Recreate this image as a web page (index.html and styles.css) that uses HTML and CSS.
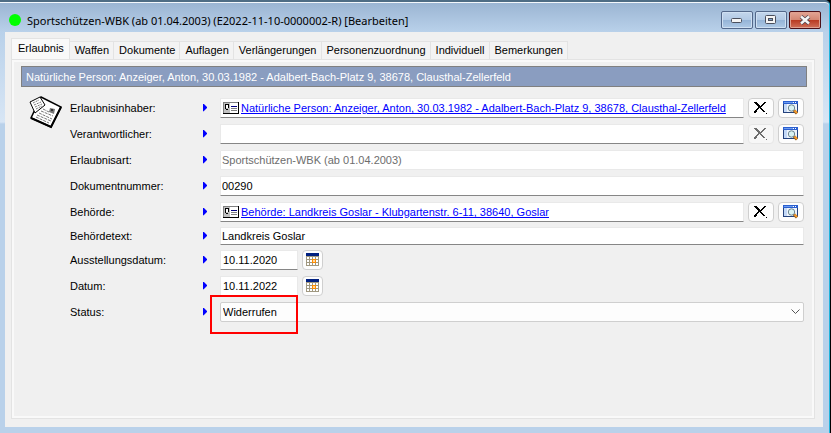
FILE: index.html
```
<!DOCTYPE html>
<html lang="de">
<head>
    <meta charset="UTF-8">
    <meta name="viewport" content="width=device-width, initial-scale=1.0">
    <title>Sportschützen-WBK [Bearbeiten]</title>
    <link rel="stylesheet" href="styles.css">
</head>
<body>
    <!-- Shared icons -->
    <svg class="icon-defs" aria-hidden="true">
        <symbol id="icon-arrow" viewBox="0 0 4 8">
            <path d="M0 0h1v1h1v1h1v1h1v1h-1v1h-1v1h-1v1h-1z" fill="#0000ff" stroke="#0000ff" stroke-width="0.5"/>
        </symbol>
        <symbol id="icon-card" viewBox="0 0 16 12">
            <rect width="16" height="12" fill="#000"/>
            <rect width="15" height="11" fill="#808080"/>
            <rect x="1" y="1" width="14" height="10" fill="#fff"/>
            <rect x="1" y="1" width="6" height="10" fill="#c0c0c0"/>
            <path d="M2 2h4v1h-3v4h-1z" fill="#000"/>
            <path d="M3 3h2v3h-2z" fill="#fff"/>
            <path d="M5 3h1v3h-1zM3 7h2v1h-2z" fill="#000"/>
            <path d="M8 4h6v1h-6z" fill="#000080"/>
            <path d="M8 6h6v1h-6zM8 8h6v1h-6z" fill="#808080"/>
        </symbol>
        <symbol id="icon-clear" viewBox="0 0 14 14">
            <path d="M0 1h3v1h1v1h1v1h1v1h1v-1h1v-1h1v-1h1v-1h2v1h-1v1h-1v1h-1v1h-1v1h-1v1h1v1h1v1h1v1h1v1h-2v-1h-1v-1h-1v-1h-1v-1h-1v1h-1v1h-1v2h-1v1h-2v-2h1v-1h1v-1h1v-1h1v-2h-1v-1h-1v-1h-1v-1h-2z" fill="currentColor"/>
            <path d="M12 12h1v1h-1z" fill="currentColor"/>
        </symbol>
        <symbol id="icon-search" viewBox="0 0 16 14">
            <rect x="0.5" y="0.5" width="14" height="11" fill="#eef4fc" stroke="#24427c"/>
            <path d="M0 0h15v3h-15z" fill="#2a5fd0"/>
            <path d="M1 1h9v1h-9z" fill="#6c9cf0"/>
            <path d="M10 1h1v1h-1zM12 1h1v1h-1z" fill="#fff"/>
            <path d="M1 3h3v8h-3z" fill="#c3d8f6"/>
            <circle cx="8.5" cy="7" r="3.2" fill="#d9f2f2" stroke="#6d8490"/>
            <path d="M11 9.5L14 12.5" stroke="#8c5a20" stroke-width="3"/>
            <path d="M11.5 9.5L14 12" stroke="#f39a2c" stroke-width="2"/>
        </symbol>
        <symbol id="icon-calendar" viewBox="0 0 13 14">
            <rect width="13" height="13" fill="#a09880"/>
            <rect width="13" height="3" fill="#002080"/>
            <path d="M1 4h2v2h-2zM4 4h2v2h-2zM7 4h2v2h-2zM10 4h2v2h-2zM1 7h2v2h-2zM4 7h2v2h-2zM10 7h2v2h-2zM1 10h2v2h-2zM4 10h2v2h-2zM7 10h2v2h-2zM10 10h2v2h-2z" fill="#fff"/>
            <path d="M6 6h4v4h-4z" fill="#ff8c00"/>
            <path d="M7 7h2v2h-2z" fill="#ffd9a0"/>
        </symbol>
    </svg>

    <div class="window">
        <div class="title-bar">
            <span class="status-dot"></span>
            <h1 class="title">Sportschützen-WBK (ab 01.04.2003) (E2022-11-10-0000002-R) [Bearbeiten]</h1>
            <div class="window-buttons">
                <button class="window-button" aria-label="Minimieren">
                    <svg width="12" height="6" viewBox="0 0 12 6"><rect x="0.5" y="1.5" width="10" height="4" rx="1" fill="#f4f4f4" stroke="#4a4f5c"/></svg>
                </button>
                <button class="window-button" aria-label="Maximieren">
                    <svg width="12" height="10" viewBox="0 0 12 10"><rect x="0.5" y="0.5" width="10" height="8" rx="1" fill="#f4f4f4" stroke="#4a4f5c"/><rect x="3.5" y="3.5" width="4" height="2" fill="#7fa3cc" stroke="#4a4f5c"/></svg>
                </button>
                <button class="window-button window-close" aria-label="Schließen">
                    <svg width="12" height="10" viewBox="0 0 12 10"><path d="M2 1.5L10 8.5M10 1.5L2 8.5" stroke="#4b4450" stroke-width="4"/><path d="M2 1.5L10 8.5M10 1.5L2 8.5" stroke="#f6f6f6" stroke-width="2.4"/></svg>
                </button>
            </div>
        </div>

        <div class="content">
            <div class="tabs" role="tablist">
                <button class="tab active" role="tab" aria-selected="true">Erlaubnis</button>
                <button class="tab" role="tab">Waffen</button>
                <button class="tab" role="tab">Dokumente</button>
                <button class="tab" role="tab">Auflagen</button>
                <button class="tab" role="tab">Verlängerungen</button>
                <button class="tab" role="tab">Personenzuordnung</button>
                <button class="tab" role="tab">Individuell</button>
                <button class="tab" role="tab">Bemerkungen</button>
            </div>

            <div class="panel" role="tabpanel">
                <div class="banner">Natürliche Person: Anzeiger, Anton, 30.03.1982 - Adalbert-Bach-Platz 9, 38678, Clausthal-Zellerfeld</div>

                <div class="form-area">
                    <svg class="form-icon" width="34" height="34" viewBox="0 0 34 34" aria-hidden="true">
                        <path d="M12 2L32 12L22 32L2 23Z" fill="#fff" stroke="#000" stroke-width="1.5"/>
                        <path d="M32 12L22 32L2 23" fill="none" stroke="#000" stroke-width="2"/>
                        <path d="M1 7L11 2L16 10L6 18Z" fill="#fff" stroke="#000"/>
                        <path d="M4 8L10 5M5 10L12 7M6 12L13 9M7 14L13 11" stroke="#777" stroke-dasharray="2 1"/>
                        <path d="M14 14L20 17M12 16L24 21M10 18L23 24M8 20L22 26M7 22L20 28" stroke="#777" stroke-dasharray="3 1"/>
                        <path d="M21 13l5 1-1 5-5-2z" fill="#777"/>
                        <path d="M22 14h2v2h-2z" fill="#333"/>
                    </svg>

                    <form class="form">
                        <div class="row">
                            <label for="inhaber">Erlaubnisinhaber:</label>
                            <svg class="arrow"><use href="#icon-arrow"/></svg>
                            <div class="field link-field">
                                <svg class="card-icon"><use href="#icon-card"/></svg>
                                <a href="#" id="inhaber">Natürliche Person: Anzeiger, Anton, 30.03.1982 - Adalbert-Bach-Platz 9, 38678, Clausthal-Zellerfeld</a>
                            </div>
                            <button type="button" class="tool-button" aria-label="Erlaubnisinhaber entfernen"><svg width="14" height="14"><use href="#icon-clear"/></svg></button>
                            <button type="button" class="tool-button" aria-label="Erlaubnisinhaber suchen"><svg width="16" height="14"><use href="#icon-search"/></svg></button>
                        </div>
                        <div class="row">
                            <label for="verantwortlicher">Verantwortlicher:</label>
                            <svg class="arrow"><use href="#icon-arrow"/></svg>
                            <input class="field" type="text" id="verantwortlicher">
                            <button type="button" class="tool-button" disabled aria-label="Verantwortlichen entfernen"><svg width="14" height="14"><use href="#icon-clear"/></svg></button>
                            <button type="button" class="tool-button" aria-label="Verantwortlichen suchen"><svg width="16" height="14"><use href="#icon-search"/></svg></button>
                        </div>
                        <div class="row">
                            <label for="art">Erlaubnisart:</label>
                            <svg class="arrow"><use href="#icon-arrow"/></svg>
                            <input class="field readonly" type="text" id="art" value="Sportschützen-WBK (ab 01.04.2003)" readonly>
                        </div>
                        <div class="row">
                            <label for="nummer">Dokumentnummer:</label>
                            <svg class="arrow"><use href="#icon-arrow"/></svg>
                            <input class="field" type="text" id="nummer" value="00290">
                        </div>
                        <div class="row">
                            <label for="behoerde">Behörde:</label>
                            <svg class="arrow"><use href="#icon-arrow"/></svg>
                            <div class="field link-field">
                                <svg class="card-icon"><use href="#icon-card"/></svg>
                                <a href="#" id="behoerde">Behörde: Landkreis Goslar - Klubgartenstr. 6-11, 38640, Goslar</a>
                            </div>
                            <button type="button" class="tool-button" aria-label="Behörde entfernen"><svg width="14" height="14"><use href="#icon-clear"/></svg></button>
                            <button type="button" class="tool-button" aria-label="Behörde suchen"><svg width="16" height="14"><use href="#icon-search"/></svg></button>
                        </div>
                        <div class="row compact">
                            <label for="behoerdetext">Behördetext:</label>
                            <svg class="arrow"><use href="#icon-arrow"/></svg>
                            <input class="field" type="text" id="behoerdetext" value="Landkreis Goslar">
                        </div>
                        <div class="row">
                            <label for="ausstellung">Ausstellungsdatum:</label>
                            <svg class="arrow"><use href="#icon-arrow"/></svg>
                            <input class="field date" type="text" id="ausstellung" value="10.11.2020">
                            <button type="button" class="tool-button calendar-button" aria-label="Kalender öffnen"><svg width="13" height="14"><use href="#icon-calendar"/></svg></button>
                        </div>
                        <div class="row">
                            <label for="datum">Datum:</label>
                            <svg class="arrow"><use href="#icon-arrow"/></svg>
                            <input class="field date" type="text" id="datum" value="10.11.2022">
                            <button type="button" class="tool-button calendar-button" aria-label="Kalender öffnen"><svg width="13" height="14"><use href="#icon-calendar"/></svg></button>
                        </div>
                        <div class="row">
                            <label for="status">Status:</label>
                            <svg class="arrow"><use href="#icon-arrow"/></svg>
                            <div class="select-wrap">
                                <select id="status">
                                    <option>Widerrufen</option>
                                </select>
                                <svg class="chevron" width="9" height="6" viewBox="0 0 9 6"><path d="M0.5 0.5L4.5 4.5L8.5 0.5" fill="none" stroke="#555"/></svg>
                                <span class="highlight"></span>
                            </div>
                        </div>
                    </form>
                </div>
            </div>
        </div>
    </div>
</body>
</html>
```
FILE: styles.css
```
* {
    box-sizing: border-box;
}
body {
    margin: 0;
    font-family: Tahoma, "Liberation Sans", Arial, sans-serif;
    font-size: 11px;
    color: #000;
    background: #000;
}
button, input, select {
    font: inherit;
    color: inherit;
    margin: 0;
}
.icon-defs {
    position: absolute;
    width: 0;
    height: 0;
}

/* Window frame */
.window {
    display: flex;
    flex-direction: column;
    min-height: 100vh;
    margin-right: 1px;
    padding: 0 6px 6px 5px;
    border-top: 2px solid #4f6d85;
    border-right: 1px solid #1fb4dc;
    border-top-right-radius: 5px;
    background: linear-gradient(#9ab4d2 0, #b9d1ea 30px, #d8e6f5 120px, #b9d1ea 122px);
    box-shadow: inset 0 1px 0 #f4f8fc;
}
.title-bar {
    display: flex;
    align-items: center;
    height: 30px;
    padding: 6px 2px 0 4px;
}
.status-dot {
    width: 12px;
    height: 12px;
    border-radius: 50%;
    background: #00ff00;
}
.title {
    flex: 1;
    margin: 0 0 0 6px;
    font-family: "Noto Sans", sans-serif;
    font-size: 11px;
    font-weight: normal;
    white-space: nowrap;
}
.window-buttons {
    display: flex;
    gap: 2px;
}
.window-button {
    display: flex;
    align-items: center;
    justify-content: center;
    width: 32px;
    height: 18px;
    padding: 0;
    border: 1px solid #53688a;
    border-radius: 2px;
    background: linear-gradient(#c3d6ec 0, #b2cae5 48%, #94b3d6 50%, #afcae6 100%);
    box-shadow: inset 0 0 0 1px #cfe0f2;
}
.window-close {
    border-color: #4c1018;
    background: linear-gradient(#e3a595 0, #d48773 48%, #b83820 50%, #d0705a 100%);
    box-shadow: inset 0 0 0 1px #dfa090;
}

/* Tabs */
.content {
    display: flex;
    flex: 1;
    flex-direction: column;
    padding: 6px 8px 8px 6px;
    background: #f0f0f0;
}
.tabs {
    display: flex;
    align-items: flex-end;
    height: 21px;
}
.tab {
    height: 18px;
    padding: 0 4px 0 5px;
    border: 1px solid #e3e3e3;
    border-width: 1px 1px 0 0;
    background: #f3f3f3;
    line-height: 17px;
    white-space: nowrap;
}
.tab.active {
    height: 22px;
    margin-bottom: -1px;
    padding: 0 5px 3px 6px;
    border-left-width: 1px;
    background: #f9f9f9;
}
.panel {
    flex: 1;
    padding: 4px 5px;
    border: 1px solid #e3e3e3;
    box-shadow: inset 0 0 0 2px #f9f9f9;
}
.banner {
    height: 21px;
    margin: 2px 2px 0 4px;
    padding: 0 4px;
    border: 1px solid #808080;
    background: #8a9dc0;
    color: #fff;
    line-height: 20px;
    white-space: nowrap;
    overflow: hidden;
}

/* Form */
.form-area {
    display: flex;
    padding: 8px 5px 0 12px;
}
.form-icon {
    flex: none;
    width: 34px;
    margin-right: 7px;
}
.form {
    flex: 1;
    min-width: 0;
}
.row {
    display: flex;
    align-items: center;
    height: 26px;
}
.row.compact {
    height: 22px;
}
.row label {
    flex: none;
    width: 133px;
}
.arrow {
    flex: none;
    width: 4px;
    height: 8px;
    margin-right: 13px;
}
.field {
    flex: 1;
    min-width: 0;
    height: 20px;
    padding: 0 1px;
    border: 1px solid #e9e9e9;
    border-bottom-color: #868686;
    border-radius: 1px;
    background: #fff;
}
.compact .field {
    height: 18px;
}
.field.readonly {
    border-bottom-color: #e9e9e9;
    color: #6d6d6d;
}
.field.date {
    flex: none;
    width: 78px;
    padding: 0 2px;
}
.link-field {
    display: flex;
    align-items: center;
    padding: 0 2px;
    white-space: nowrap;
    overflow: hidden;
}
.link-field a {
    color: #0000ff;
}
.card-icon {
    flex: none;
    width: 16px;
    height: 12px;
    margin-right: 2px;
}
.tool-button {
    display: flex;
    flex: none;
    align-items: center;
    justify-content: center;
    width: 26px;
    height: 20px;
    margin-left: 4px;
    padding: 0;
    border: 1px solid #cfcfcf;
    border-radius: 4px;
    background: #fdfdfd;
}
.tool-button:disabled {
    border-color: #e6e6e6;
    background: #f7f7f7;
    color: #6d6d6d;
}
.calendar-button {
    width: 21px;
}
.select-wrap {
    position: relative;
    display: flex;
    flex: 1;
    align-items: center;
}
select {
    width: 100%;
    height: 20px;
    padding: 0 20px 0 2px;
    border: 1px solid #cfcfcf;
    border-radius: 2px;
    background: #fdfdfd;
    appearance: none;
}
.chevron {
    position: absolute;
    right: 4px;
    pointer-events: none;
}

/* Red frame around the status value */
.highlight {
    position: absolute;
    top: -7px;
    left: -10px;
    width: 88px;
    height: 39px;
    border: 2px solid #ff0000;
    pointer-events: none;
}
```
